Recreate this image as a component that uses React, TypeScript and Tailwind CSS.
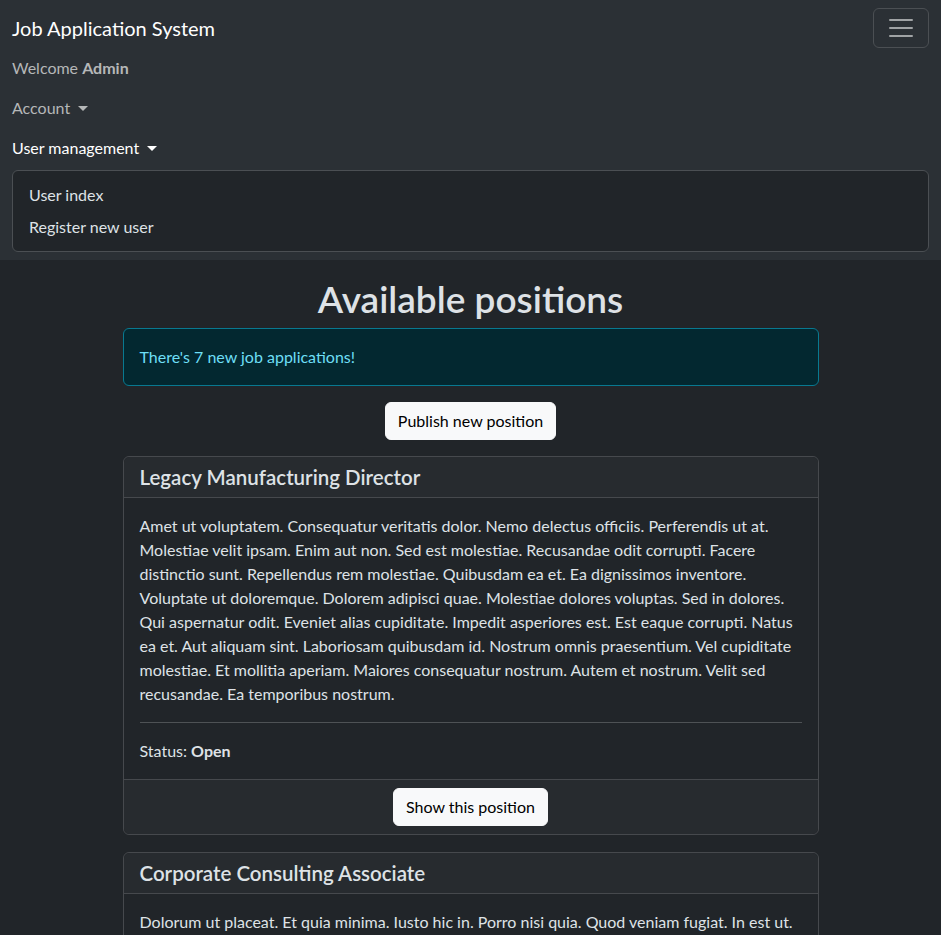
import React from 'react'

const firstDescription = [
  'Amet ut voluptatem. Consequatur veritatis dolor. Nemo delectus officiis. Perferendis ut at.',
  'Molestiae velit ipsam. Enim aut non. Sed est molestiae. Recusandae odit corrupti. Facere',
  'distinctio sunt. Repellendus rem molestiae. Quibusdam ea et. Ea dignissimos inventore.',
  'Voluptate ut doloremque. Dolorem adipisci quae. Molestiae dolores voluptas. Sed in dolores.',
  'Qui aspernatur odit. Eveniet alias cupiditate. Impedit asperiores est. Est eaque corrupti. Natus',
  'ea et. Aut aliquam sint. Laboriosam quibusdam id. Nostrum omnis praesentium. Vel cupiditate',
  'molestiae. Et mollitia aperiam. Maiores consequatur nostrum. Autem et nostrum. Velit sed',
  'recusandae. Ea temporibus nostrum.',
]

const positions = [
  { title: 'Legacy Manufacturing Director', lines: firstDescription, status: 'Open' },
  {
    title: 'Corporate Consulting Associate',
    lines: ['Dolorum ut placeat. Et quia minima. Iusto hic in. Porro nisi quia. Quod veniam fugiat. In est ut.'],
    status: 'Open',
  },
]

function Caret() {
  return (
    <span className="ml-[4px] inline-block h-0 w-0 border-x-[5px] border-t-[5px] border-x-transparent border-t-current align-[3px]" />
  )
}

function Navbar() {
  return (
    <nav className="bg-[#2b3035] px-3 py-2">
      <div className="flex items-center justify-between">
        <a className="py-[5px] text-[20px] leading-[30px] text-white">Job Application System</a>
        <button className="flex h-10 w-14 items-center justify-center rounded-md border border-[#4b4f53]" aria-label="Toggle navigation">
          <svg width="30" height="30" viewBox="0 0 30 30">
            <path d="M4 7h22M4 15h22M4 23h22" stroke="#a0a3a5" strokeWidth="2" strokeLinecap="round" />
          </svg>
        </button>
      </div>
      <ul className="flex flex-col">
        <li className="py-2 leading-6 text-[#b5b7b8]">
          Welcome <b className="font-bold">Admin</b>
        </li>
        <li className="py-2 leading-6 text-[#b5b7b8]">
          Account <Caret />
        </li>
        <li className="py-2 leading-6 text-white">
          User management <Caret />
        </li>
        <li className="mt-[2px] rounded-md border border-[#4b4f53] bg-[#212529] py-2">
          <div className="px-4 py-1 leading-6 text-[#dee2e6]">User index</div>
          <div className="px-4 py-1 leading-6 text-[#dee2e6]">Register new user</div>
        </li>
      </ul>
    </nav>
  )
}

function PositionCard({ title, lines, status }: { title: string; lines: string[]; status: string }) {
  return (
    <div className="mb-[17px] rounded-md border border-[#46494d] bg-[#212529]">
      <div className="rounded-t-md border-b border-[#46494d] bg-[#272b2f] px-4 py-2">
        <h5 className="text-[20.5px] font-semibold leading-6 text-[#dee2e6]">{title}</h5>
      </div>
      <div className="p-4">
        <p className="mb-4 leading-6">
          {lines.map((line, i) => (
            <span key={i} className="block whitespace-nowrap">{line}</span>
          ))}
        </p>
        <hr className="my-4 border-t border-[#4e5255]" />
        <p className="mb-0 leading-6">
          Status: <b className="font-bold">{status}</b>
        </p>
      </div>
      <div className="flex justify-center rounded-b-md border-t border-[#46494d] bg-[#272b2f] px-4 py-2">
        <button className="rounded-md border border-[#f8f9fa] bg-[#f8f9fa] px-3 py-1.5 leading-6 text-black">
          Show this position
        </button>
      </div>
    </div>
  )
}

export default function App() {
  return (
    <div className="min-h-[935px] bg-[#212529] text-[16px] text-[#dee2e6] [font-family:Lato,'Liberation_Sans',sans-serif]">
      <Navbar />
      <main className="mx-auto mt-[17px] w-[720px] px-3">
        <h1 className="mb-2 text-center text-[37px] font-semibold leading-[43px] text-[#dee2e6]">Available positions</h1>
        <div className="mb-4 rounded-md border border-[#087990] bg-[#032830] p-4 leading-6 text-[#6edff6]">
          There's 7 new job applications!
        </div>
        <div className="mb-4 flex justify-center">
          <button className="rounded-md border border-[#f8f9fa] bg-[#f8f9fa] px-3 py-1.5 leading-6 text-black">
            Publish new position
          </button>
        </div>
        {positions.map((p) => (
          <PositionCard key={p.title} {...p} />
        ))}
      </main>
    </div>
  )
}
